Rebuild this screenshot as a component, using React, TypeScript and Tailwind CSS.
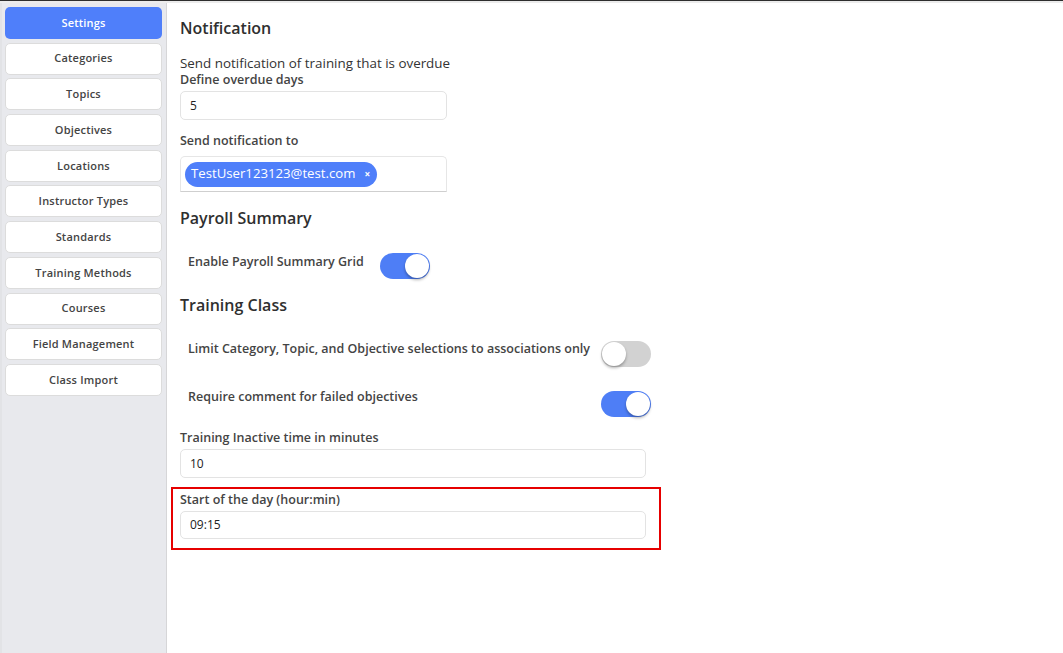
import React from "react";

const navItems = [
  "Settings",
  "Categories",
  "Topics",
  "Objectives",
  "Locations",
  "Instructor Types",
  "Standards",
  "Training Methods",
  "Courses",
  "Field Management",
  "Class Import",
];

function Toggle({ on, className = "" }: { on: boolean; className?: string }) {
  return (
    <div
      className={`relative w-[50px] h-[26px] rounded-full shrink-0 ${className} ${
        on ? "bg-[#4e7ef6]" : "bg-[#d2d2d2]"
      }`}
    >
      <div
        className={`absolute top-[1px] w-[24px] h-[24px] rounded-full bg-white shadow-[0_2px_3px_rgba(0,0,0,0.3)] ${
          on ? "right-[1px]" : "left-[1px]"
        }`}
      />
    </div>
  );
}

function Input({ value, width, h = "h-[29px]" }: { value: string; width: string; h?: string }) {
  return (
    <div
      className={`${width} ${h} border border-[#e3e3e3] rounded-[5px] bg-white flex items-center px-[9px] text-[12px] text-[#222]`}
    >
      {value}
    </div>
  );
}

const label = "text-[12.5px] font-semibold text-[#444] leading-[18px]";
const heading = "text-[16px] font-semibold text-[#2f2f2f] leading-[20px]";

export default function App() {
  return (
    <div
      className="w-[1063px] h-[653px] flex flex-col bg-white overflow-hidden"
      style={{ fontFamily: '"Open Sans", "Noto Sans", sans-serif' }}
    >
      <div className="h-[1px] bg-[#2e2e2e] shrink-0" />
      <div className="h-[2px] bg-[#ececec] shrink-0" />
      <div className="flex flex-1 min-h-0">
        {/* Sidebar */}
        <div className="w-[167px] shrink-0 bg-[#e8e9ed] border-r border-[#d6d6d8] border-l-2 border-l-[#e2e3e6] pl-[3px] pr-[4px] pt-[4px] flex flex-col gap-[3.7px]">
          {navItems.map((item, i) => (
            <div
              key={item}
              className={`h-[32px] rounded-[5px] flex items-center justify-center text-[11px] font-semibold tracking-[0.2px] ${
                i === 0
                  ? "bg-[#4f7ffa] text-white"
                  : "bg-white text-[#444] border border-[#dcdcdc]"
              }`}
            >
              {item}
            </div>
          ))}
        </div>

        {/* Main */}
        <div className="flex-1 pl-[13px] pt-[15px] text-[#333]">
          <div className={heading}>Notification</div>
          <div className="mt-[17px] text-[13.4px] leading-[16px] text-[#333]">
            Send notification of training that is overdue
          </div>
          <div className={label}>Define overdue days</div>
          <div className="mt-[2px]">
            <Input value="5" width="w-[267px]" />
          </div>
          <div className={`mt-[12px] ${label}`}>Send notification to</div>
          <div className="mt-[6px] w-[267px] h-[36px] border border-[#e6e6e6] border-b-[#cfcfcf] rounded-t-[5px] flex items-center px-[4px]">
            <div className="h-[25px] rounded-full bg-[#4f7ffa] text-white text-[13.2px] flex items-center pl-[6px] pr-[7px]">
              TestUser123123@test.com
              <span className="ml-[9px] text-[10px] font-bold">×</span>
            </div>
          </div>

          <div className={`mt-[16px] ${heading}`}>Payroll Summary</div>
          <div className="mt-[24px] flex items-start pl-[8px] gap-[16px]">
            <div className={`mt-[1px] ${label}`}>Enable Payroll Summary Grid</div>
            <Toggle on={true} className="mt-[1px]" />
          </div>

          <div className={`mt-[16px] ${heading}`}>Training Class</div>
          <div className="mt-[24px] w-[471px] flex items-start justify-between pl-[8px]">
            <div className={`mt-[1px] ${label}`}>
              Limit Category, Topic, and Objective selections to associations only
            </div>
            <Toggle on={false} className="mt-[2px]" />
          </div>
          <div className="mt-[21px] w-[471px] flex items-start justify-between pl-[8px]">
            <div className={label}>Require comment for failed objectives</div>
            <Toggle on={true} className="mt-[3px]" />
          </div>

          <div className={`mt-[12px] ${label}`}>Training Inactive time in minutes</div>
          <div className="mt-[2px]">
            <Input value="10" width="w-[466px]" />
          </div>

          <div className="mt-[9px] ml-[-9px] w-[490px] h-[63px] border-2 border-[#e60000] pl-[7px] pt-[2px]">
            <div className={label}>Start of the day (hour:min)</div>
            <div className="mt-[2px]">
              <Input value="09:15" width="w-[466px]" h="h-[28px]" />
            </div>
          </div>
        </div>
      </div>
    </div>
  );
}
